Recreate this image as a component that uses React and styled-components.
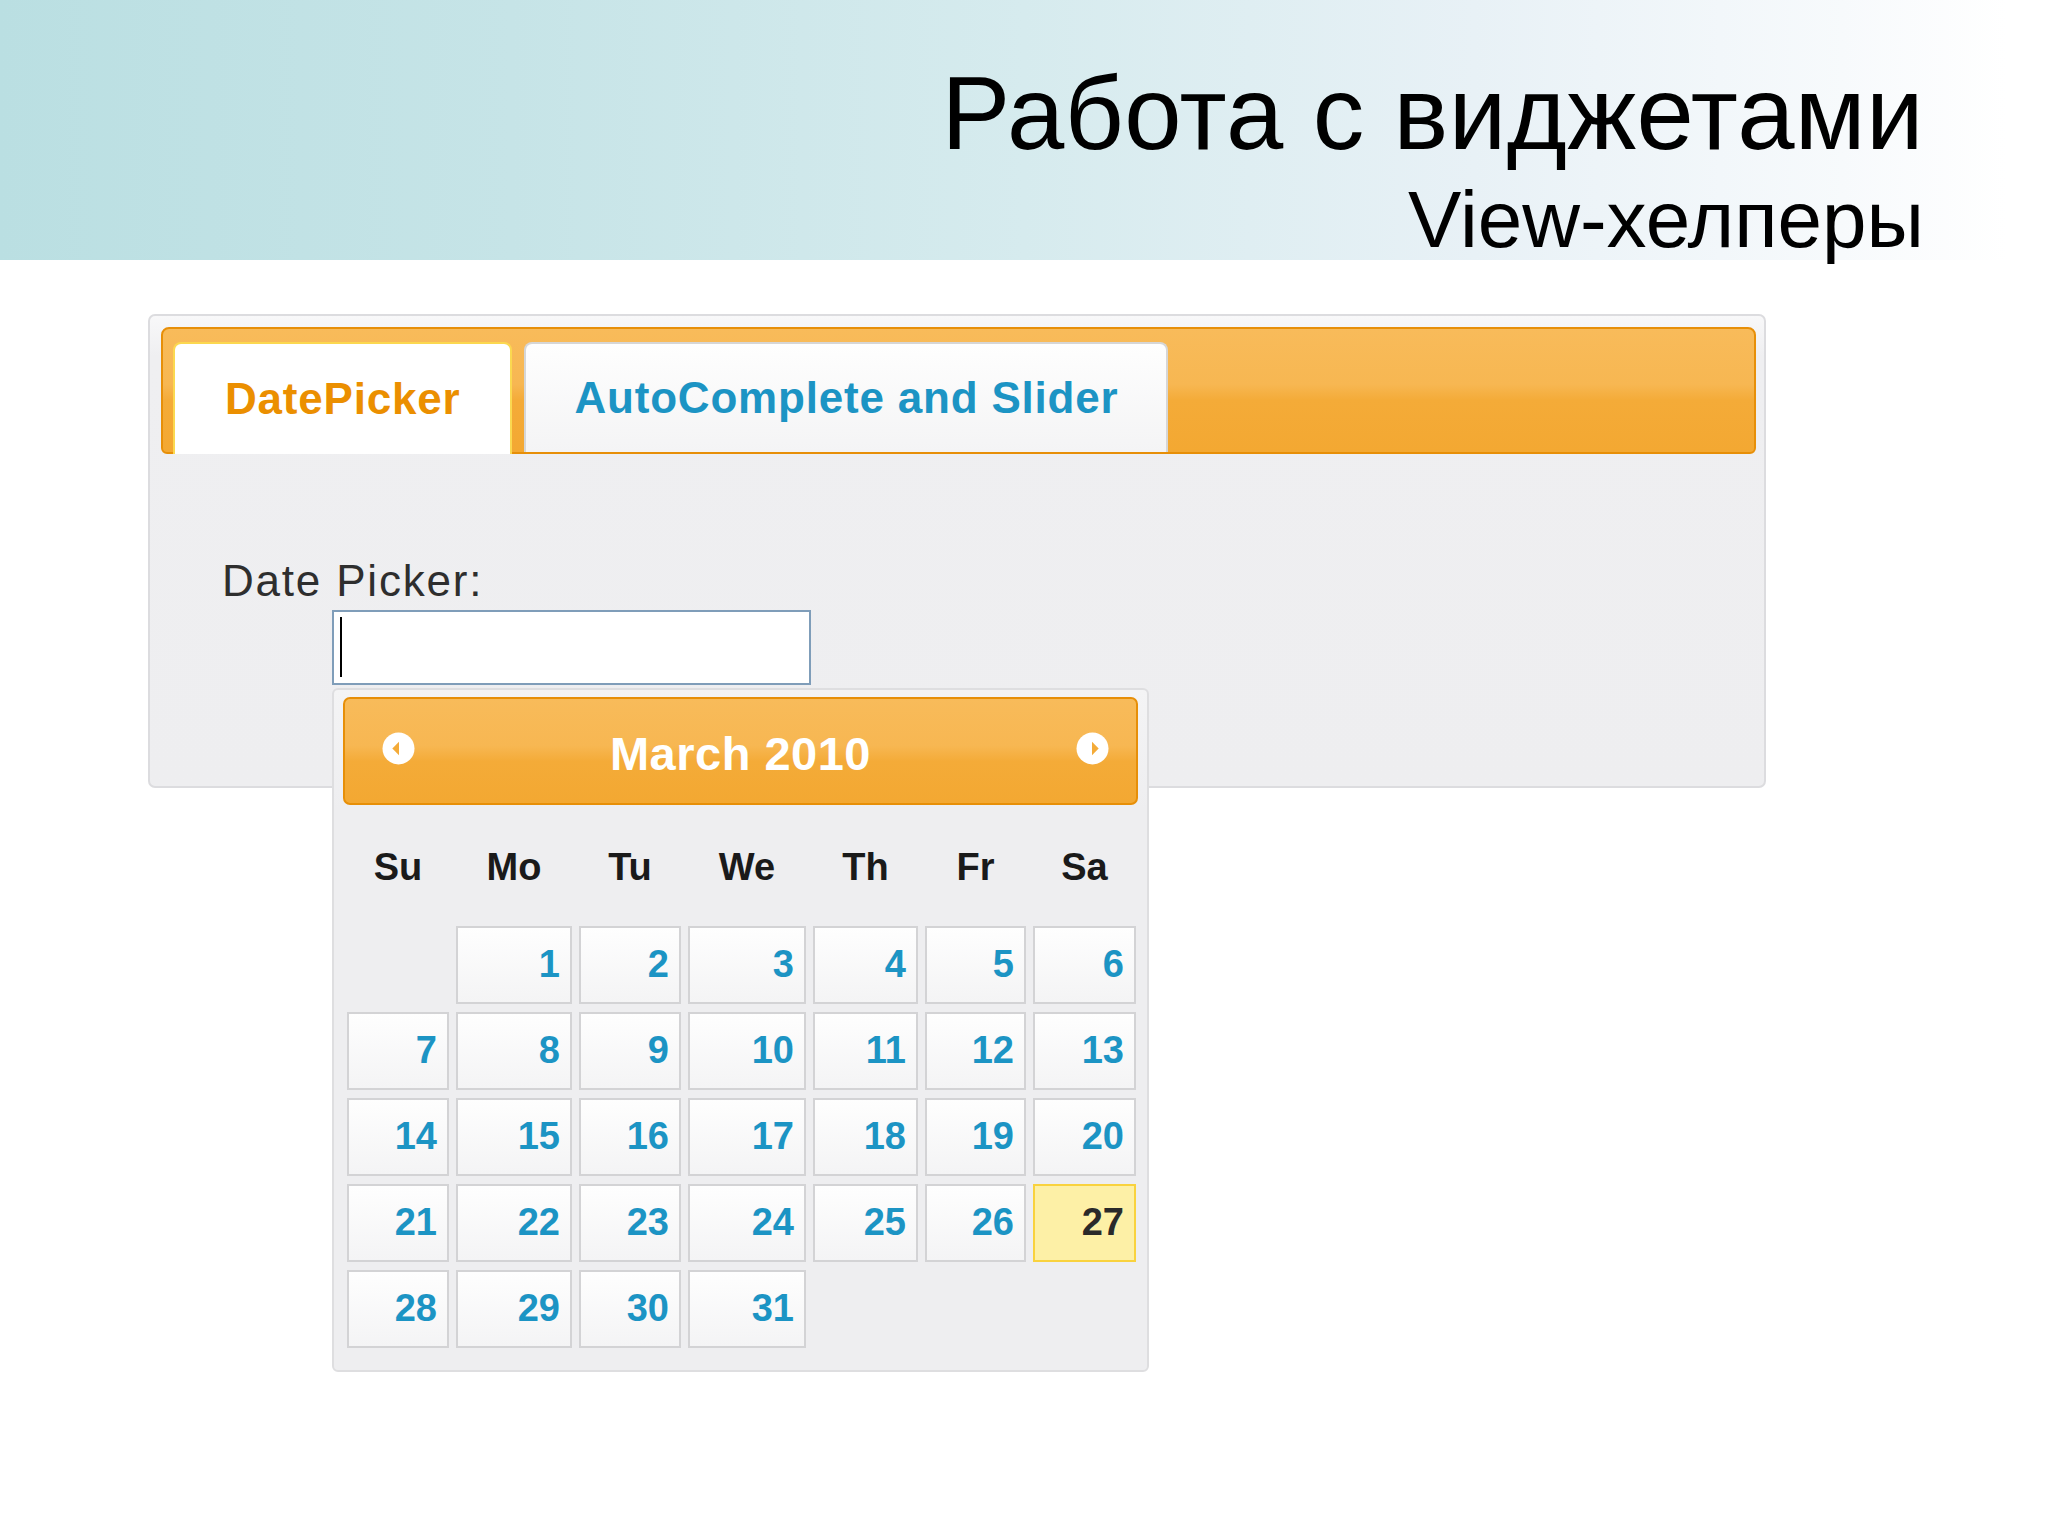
import React from "react"
import styled, { createGlobalStyle } from "styled-components"

const GlobalStyle = createGlobalStyle`
    html, body {
        margin: 0;
        padding: 0;
        background: #ffffff;
    }
    body {
        font-family: "Liberation Sans", Arial, sans-serif;
    }
`

const Page = styled.div`
    width: 2048px;
    height: 1536px;
    overflow: hidden;
    background: #ffffff;
`

const Banner = styled.header`
    box-sizing: border-box;
    height: 260px;
    padding: 62px 124px 0 0;
    text-align: right;
    color: #000000;
    background: linear-gradient(90deg, #badfe2 0%, #c6e4e7 25%, #d6ebee 50%, #e8f1f6 72%, #f7fafc 90%, #ffffff 98%);
`

const Title = styled.h1`
    margin: 0;
    font-family: "Liberation Sans", Arial, sans-serif;
    font-weight: normal;
    font-size: 103px;
    letter-spacing: 0.4px;
    line-height: 103px;
`

const Subtitle = styled.h2`
    margin: 15px 0 0;
    font-family: "Liberation Sans", Arial, sans-serif;
    font-weight: normal;
    font-size: 80px;
    line-height: 80px;
`

const Main = styled.main`
    padding: 54px 0 0 148px;
`

const Widget = styled.section`
    box-sizing: border-box;
    width: 1618px;
    height: 474px;
    padding: 11px 8px 0 11px;
    border: 2px solid #dcdcdf;
    border-radius: 7px;
    background: linear-gradient(#f8f8f9 0px, #efeff1 40px, #eeeef0 100%);
`

const TabBar = styled.nav`
    box-sizing: border-box;
    height: 127px;
    display: flex;
    align-items: flex-start;
    gap: 12px;
    padding: 13px 0 0 10px;
    border: 2px solid #e78f08;
    border-radius: 8px 8px 6px 6px;
    background: linear-gradient(#f8bb5a 0%, #f7b752 45%, #f4ab38 58%, #f3a832 100%);
`

const Tab = styled.div`
    box-sizing: border-box;
    height: ${p => p.$active ? "112px" : "110px"};
    display: flex;
    align-items: center;
    padding: 0 ${p => p.$active ? "50px" : "48px"};
    border: 2px solid ${p => p.$active ? "#fbd850" : "#d6d6d6"};
    border-bottom: none;
    border-radius: 8px 8px 0 0;
    background: ${p => p.$active ? "#ffffff" : "linear-gradient(#fefefe, #f4f4f5)"};
    color: ${p => p.$active ? "#eb8f00" : "#1c94c4"};
    font-size: 44px;
    font-weight: bold;
    letter-spacing: 0.8px;
    line-height: 44px;
    white-space: nowrap;
`

const Panel = styled.div`
    padding: 105px 0 0 61px;
`

const FieldLabel = styled.label`
    display: block;
    color: #2e2e2e;
    font-size: 44px;
    letter-spacing: 1.8px;
    line-height: 43px;
`

const InputWrap = styled.div`
    position: relative;
    margin: 8px 0 0 110px;
    width: 479px;
`

const TextInput = styled.div`
    position: relative;
    box-sizing: border-box;
    width: 479px;
    height: 75px;
    border: 2px solid #7f9db9;
    background: #ffffff;

    &::after {
        content: "";
        position: absolute;
        left: 6px;
        top: 5px;
        width: 2px;
        height: 60px;
        background: #000000;
    }
`

const Popup = styled.div`
    position: absolute;
    top: 78px;
    left: 0;
    box-sizing: border-box;
    width: 817px;
    height: 684px;
    padding: 7px 9px 0;
    border: 2px solid #dedee0;
    border-radius: 6px;
    background: linear-gradient(#f4f4f5 0px, #eeeef0 120px);
    z-index: 2;
`

const CalHeader = styled.div`
    box-sizing: border-box;
    height: 108px;
    display: flex;
    align-items: center;
    justify-content: space-between;
    padding: 0 27px 6px 37px;
    border: 2px solid #e78f08;
    border-radius: 7px;
    background: linear-gradient(#f8bb5a 0%, #f7b752 45%, #f4ab38 60%, #f3a832 100%);
`

const MonthTitle = styled.div`
    margin: 10px 10px 0 0;
    color: #ffffff;
    font-size: 47px;
    font-weight: bold;
    letter-spacing: 0.5px;
    line-height: 47px;
`

const NavIcon = ({ dir }) => (
    <svg width="33" height="33" viewBox="0 0 32 32">
        <circle cx="16" cy="16" r="15.5" fill="#ffffff" />
        <polygon
            points={dir === "prev" ? "10,16 16.5,9.5 16.5,22.5" : "22,16 15.5,9.5 15.5,22.5"}
            fill="#f4ab38"
        />
    </svg>
)

const COLS = "102px 116px 102px 118px 105px 101px 103px"

const DayNames = styled.div`
    display: grid;
    grid-template-columns: ${COLS};
    column-gap: 7px;
    margin: 43px 0 0 4px;
`

const DayName = styled.div`
    text-align: center;
    color: #1a1a1a;
    font-size: 38px;
    font-weight: bold;
    line-height: 38px;
`

const DayGrid = styled.div`
    display: grid;
    grid-template-columns: ${COLS};
    grid-auto-rows: 78px;
    gap: 8px 7px;
    margin: 40px 0 0 4px;
`

const DayCell = styled.div`
    box-sizing: border-box;
    display: flex;
    align-items: center;
    justify-content: flex-end;
    padding: 0 10px 2px 0;
    border: 2px solid ${p => p.$today ? "#f9d23e" : "#d3d3d5"};
    background: ${p => p.$today ? "#fdf0a6" : "linear-gradient(#fefefe, #f4f4f5)"};
    color: ${p => p.$today ? "#2a2a2a" : "#1c94c4"};
    font-size: 38px;
    font-weight: bold;
    line-height: 38px;
`

const Blank = styled.div``

const days = ["Su", "Mo", "Tu", "We", "Th", "Fr", "Sa"]

// March 2010 starts on a Monday
const cells = [null, ...Array.from({ length: 31 }, (_, i) => i + 1), null, null, null]

const App = () => (
    <Page>
        <GlobalStyle />
        <Banner>
            <Title>Работа с виджетами</Title>
            <Subtitle>View-хелперы</Subtitle>
        </Banner>
        <Main>
            <Widget>
                <TabBar>
                    <Tab $active>DatePicker</Tab>
                    <Tab>AutoComplete and Slider</Tab>
                </TabBar>
                <Panel>
                    <FieldLabel>Date Picker:</FieldLabel>
                    <InputWrap>
                        <TextInput />
                        <Popup>
                            <CalHeader>
                                <NavIcon dir="prev" />
                                <MonthTitle>March 2010</MonthTitle>
                                <NavIcon dir="next" />
                            </CalHeader>
                            <DayNames>
                                {days.map(d => <DayName key={d}>{d}</DayName>)}
                            </DayNames>
                            <DayGrid>
                                {cells.map((d, i) =>
                                    d === null
                                        ? <Blank key={"b" + i} />
                                        : <DayCell key={d} $today={d === 27}>{d}</DayCell>
                                )}
                            </DayGrid>
                        </Popup>
                    </InputWrap>
                </Panel>
            </Widget>
        </Main>
    </Page>
)

export default App
